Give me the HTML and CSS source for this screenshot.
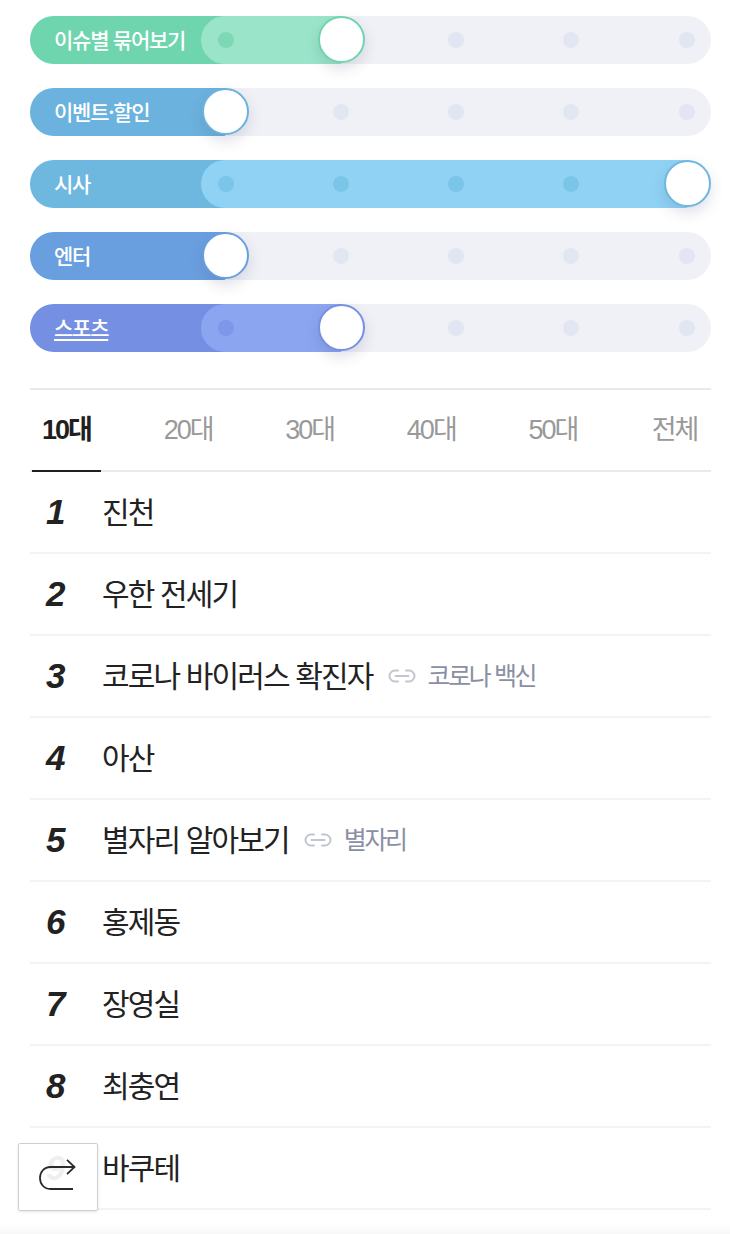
FILE: index.html
```html
<!DOCTYPE html>
<html lang="ko">
<head>
<meta charset="utf-8">
<title>실시간 검색어</title>
<link rel="stylesheet" href="styles.css">
</head>
<body>
<main class="page">
  <section class="sliders">
    <div class="slider green">
      <a class="slider-label">이슈별 묶어보기</a>
      <div class="track">
        <div class="fill" style="width:140px"></div>
        <div class="dots"><i></i><i></i><i></i><i></i><i></i></div>
        <div class="thumb" style="left:116px"></div>
      </div>
    </div>
    <div class="slider sky">
      <a class="slider-label">이벤트·할인</a>
      <div class="track">
        <div class="dots"><i></i><i></i><i></i><i></i><i></i></div>
        <div class="thumb" style="left:0"></div>
      </div>
    </div>
    <div class="slider cyan">
      <a class="slider-label">시사</a>
      <div class="track">
        <div class="fill" style="width:486px"></div>
        <div class="dots"><i></i><i></i><i></i><i></i><i></i></div>
        <div class="thumb" style="left:462px"></div>
      </div>
    </div>
    <div class="slider blue">
      <a class="slider-label">엔터</a>
      <div class="track">
        <div class="dots"><i></i><i></i><i></i><i></i><i></i></div>
        <div class="thumb" style="left:0"></div>
      </div>
    </div>
    <div class="slider violet">
      <a class="slider-label underlined">스포츠</a>
      <div class="track">
        <div class="fill" style="width:140px"></div>
        <div class="dots"><i></i><i></i><i></i><i></i><i></i></div>
        <div class="thumb" style="left:116px"></div>
      </div>
    </div>
  </section>

  <nav class="tabs">
    <a class="tab active">10대</a>
    <a class="tab">20대</a>
    <a class="tab">30대</a>
    <a class="tab">40대</a>
    <a class="tab">50대</a>
    <a class="tab">전체</a>
  </nav>

  <ol class="ranks">
    <li class="rank"><span class="num">1</span><span class="word">진천</span></li>
    <li class="rank"><span class="num">2</span><span class="word">우한 전세기</span></li>
    <li class="rank"><span class="num">3</span><span class="word">코로나 바이러스 확진자</span>
      <svg class="link-icon" viewBox="0 0 30 16"><path d="M11 2.500H8a5.500 5.500 0 0 0 0 11h3M19 2.500h3a5.500 5.500 0 0 1 0 11h-3M8.500 8h13"/></svg>
      <span class="sub">코로나 백신</span></li>
    <li class="rank"><span class="num">4</span><span class="word">아산</span></li>
    <li class="rank"><span class="num">5</span><span class="word">별자리 알아보기</span>
      <svg class="link-icon" viewBox="0 0 30 16"><path d="M11 2.500H8a5.500 5.500 0 0 0 0 11h3M19 2.500h3a5.500 5.500 0 0 1 0 11h-3M8.500 8h13"/></svg>
      <span class="sub">별자리</span></li>
    <li class="rank"><span class="num">6</span><span class="word">홍제동</span></li>
    <li class="rank"><span class="num">7</span><span class="word">장영실</span></li>
    <li class="rank"><span class="num">8</span><span class="word">최충연</span></li>
    <li class="rank"><span class="num">9</span><span class="word">바쿠테</span></li>
  </ol>
</main>
<button class="share" type="button" aria-label="공유">
  <svg viewBox="0 0 37 31"><path d="M34 30H11.500C5 30 1 25 1 19S5 8 11.500 8H35.500M28 .800 35.500 8 28 15.200"/></svg>
</button>
<div class="bottom-fade"></div>
</body>
</html>
```
FILE: styles.css
```css
* { box-sizing: border-box; }
html, body { margin: 0; padding: 0; background: #fff; }
body {
  width: 730px;
  height: 1234px;
  overflow: hidden;
  position: relative;
  font-family: "Noto Sans CJK KR", "Noto Sans", sans-serif;
  color: #222;
}
.page { padding: 16px 19px 0 30px; }

.sliders { display: flex; flex-direction: column; gap: 24px; }
.slider {
  display: flex;
  height: 48px;
  border-radius: 24px;
  background: #f0f1f6;
}
.slider-label {
  flex: 0 0 195px;
  padding-left: 24px;
  border-radius: 24px 0 0 24px;
  background: var(--main);
  color: #fff;
  font-size: 21px;
  font-weight: 500;
  letter-spacing: -1.25px;
  line-height: 46px;
  white-space: nowrap;
}
.slider-label.underlined { text-decoration: underline; text-underline-offset: 3px; }
.track { flex: 1; position: relative; }
.fill {
  position: absolute;
  top: 0;
  bottom: 0;
  left: -24px;
  border-radius: 24px 0 0 24px;
  background: var(--light);
}
.dots {
  position: absolute;
  inset: 16px 16.5px 16px -7px;
  display: flex;
  justify-content: space-between;
}
.dots i { width: 16px; height: 16px; border-radius: 50%; background: #e1e6f2; }
.thumb {
  position: absolute;
  top: 0;
  width: 47px;
  height: 47px;
  margin-left: -23px;
  border-radius: 50%;
  background: #fff;
  border: 2px solid var(--main);
  box-shadow: 0 6px 14px rgba(60, 70, 110, .16);
}
.green  { --main: #6fd5ae; --light: #9ae5ca; --dot: #7dd8b6; }
.sky    { --main: #6cb2de; --light: #8cc7ea; --dot: #7cbde4; }
.cyan   { --main: #6eb8df; --light: #90d2f4; --dot: #7bc5e8; }
.blue   { --main: #6a9fdf; --light: #88b7ea; --dot: #7aa9e4; }
.violet { --main: #7590e3; --light: #8ca5f0; --dot: #7e97e8; }
.green .fill ~ .dots i:first-child,
.violet .fill ~ .dots i:first-child,
.cyan .fill ~ .dots i:nth-child(-n+4) { background: var(--dot); }

.tabs {
  display: flex;
  justify-content: space-between;
  height: 84px;
  margin-top: 36px;
  padding: 0 2px;
  border-top: 2px solid #eaeaea;
  border-bottom: 2px solid #eaeaea;
}
.tab {
  flex: 0 0 69px;
  height: 82px;
  text-align: center;
  font-family: "Liberation Sans", "Noto Sans CJK KR", sans-serif;
  font-size: 27px;
  letter-spacing: -2px;
  line-height: 81px;
  color: #999;
  white-space: nowrap;
}
.tab.active { color: #1f1f1f; font-weight: 700; border-bottom: 2px solid #1f1f1f; }

.ranks { list-style: none; margin: 0; padding: 0; }
.rank {
  display: flex;
  align-items: center;
  height: 82px;
  border-bottom: 2px solid #f3f3f3;
}
.num {
  flex: 0 0 72px;
  padding-left: 16px;
  font-family: "Liberation Sans", Arial, sans-serif;
  font-size: 35px;
  font-weight: 700;
  font-style: italic;
  color: #222;
}
.word {
  padding-bottom: 5px;
  font-size: 30px;
  letter-spacing: -1.85px;
  white-space: nowrap;
  color: #222;
}
.link-icon {
  flex: 0 0 30px;
  width: 30px;
  height: 16px;
  margin: 0 11px 0 14px;
  fill: none;
  stroke: #c3c6d1;
  stroke-width: 2;
  stroke-linecap: round;
}
.sub {
  padding-bottom: 5px;
  font-size: 25px;
  letter-spacing: -2.4px;
  color: #8a8fa3;
  white-space: nowrap;
}

.share {
  position: absolute;
  left: 18px;
  top: 1143px;
  width: 80px;
  height: 68px;
  padding: 0;
  display: flex;
  align-items: center;
  justify-content: center;
  background: rgba(255, 255, 255, .93);
  border: 1px solid #cfcfcf;
  border-radius: 2px;
  box-shadow: 0 1px 3px rgba(0, 0, 0, .1);
}
.share svg {
  width: 37px;
  height: 31px;
  margin: 0 2px 5px 0;
  fill: none;
  stroke: #2a2a2a;
  stroke-width: 1.8;
}
.bottom-fade {
  position: absolute;
  left: 0;
  right: 0;
  bottom: 0;
  height: 12px;
  background: linear-gradient(#fff, #f8f8f8);
}
```
